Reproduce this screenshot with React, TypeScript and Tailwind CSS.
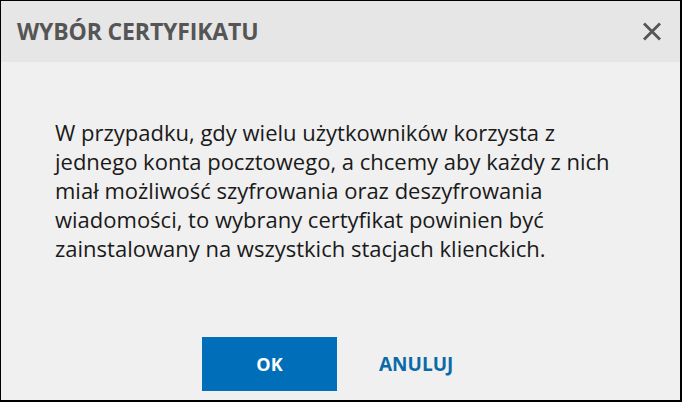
import React from "react";

export default function App() {
  return (
    <div className="w-[682px] h-[402px] border-l border-t border-r-2 border-b-2 border-black flex flex-col bg-[#f0f0f0]" style={{ fontFamily: '"Open Sans", "Noto Sans", sans-serif' }}>
      <div className="h-[61px] bg-[#e6e6e6] flex items-center justify-between pl-[16px] pr-[18px] shrink-0">
        <div className="text-[23px] font-bold text-[#555555] tracking-[-0.15px] leading-none">WYBÓR CERTYFIKATU</div>
        <svg width="20" height="19" viewBox="0 0 20 19" className="-mt-[1px]">
          <path d="M2 1.5 L18 17.5 M18 1.5 L2 17.5" stroke="#555555" strokeWidth="2.8" strokeLinecap="butt" />
        </svg>
      </div>
      <div className="flex-1 flex flex-col">
        <p className="pl-[54px] pt-[56px] pr-[20px] text-[22px] leading-[29px] text-[#1a1a1a]">
          W przypadku, gdy wielu użytkowników korzysta z<br />
          jednego konta pocztowego, a chcemy aby każdy z nich<br />
          miał możliwość szyfrowania oraz deszyfrowania<br />
          wiadomości, to wybrany certyfikat powinien być<br />
          zainstalowany na wszystkich stacjach klienckich.
        </p>
        <div className="mt-auto flex items-center pl-[201px] pb-[9px]">
          <button className="w-[135px] h-[54px] bg-[#006eb8] text-white text-[18px] font-bold">OK</button>
          <button className="ml-[42px] text-[#0a6aa8] text-[19px] font-bold">ANULUJ</button>
        </div>
      </div>
    </div>
  );
}
